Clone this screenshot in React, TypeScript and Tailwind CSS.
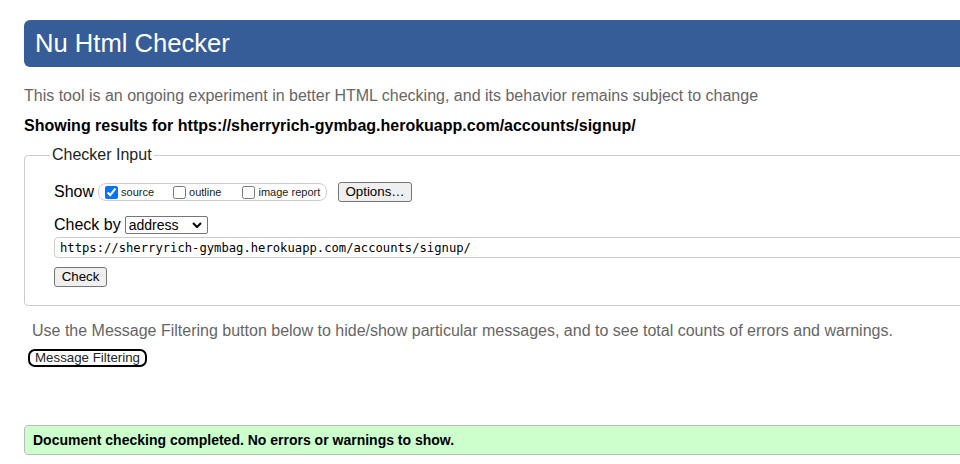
import { useState } from "react";

function Chevron() {
  return (
    <svg width="10" height="7" viewBox="0 0 10 7" className="pointer-events-none absolute right-[6px] top-1/2 -translate-y-1/2">
      <path d="M1 1.5 L5 5.5 L9 1.5" fill="none" stroke="#000" strokeWidth="2" />
    </svg>
  );
}

function Check({ label, checked, onChange }: { label: string; checked: boolean; onChange: () => void }) {
  return (
    <label className="flex items-center gap-[3px] text-[11px] text-[#222]">
      <input
        type="checkbox"
        checked={checked}
        onChange={onChange}
        className="m-0 h-[13px] w-[13px] accent-[#0075ff]"
      />
      {label}
    </label>
  );
}

export default function App() {
  const [show, setShow] = useState({ source: true, outline: false, image: false });
  const [url, setUrl] = useState("https://sherryrich-gymbag.herokuapp.com/accounts/signup/");

  return (
    <div className="h-[464px] w-[960px] overflow-hidden bg-white font-['Liberation_Sans',Arial,sans-serif] text-black">
      <div className="w-[1100px] pl-[24px] pt-[20px]">
        <h1 className="h-[47px] rounded-l-[6px] bg-[#365d98] pl-[11px] text-[25.6px] leading-[47px] text-white">
          Nu Html Checker
        </h1>

        <p className="mt-[20px] text-[16px] leading-[18px] text-[#666]">
          This tool is an ongoing experiment in better HTML checking, and its behavior remains subject to change
        </p>
        <p className="mt-[12px] text-[16px] font-bold leading-[18px]">
          Showing results for https://sherryrich-gymbag.herokuapp.com/accounts/signup/
        </p>

        <fieldset className="mt-[11px] rounded-l-[4px] border border-[#ccc] pb-[18px] pl-[29px] pt-[18px]">
          <legend className="-ml-[4px] px-[2px] text-[16px] leading-[18px] text-[#222]">Checker Input</legend>

          <div className="flex h-[20px] items-center">
            <span className="text-[16px] leading-[18px]">Show</span>
            <div className="ml-[4px] flex h-[18px] w-[229px] items-center rounded-[8px] border border-[#ccc] pl-[6px]">
              <Check label="source" checked={show.source} onChange={() => setShow({ ...show, source: !show.source })} />
              <div className="ml-[19px]">
                <Check label="outline" checked={show.outline} onChange={() => setShow({ ...show, outline: !show.outline })} />
              </div>
              <div className="ml-[21px]">
                <Check label="image report" checked={show.image} onChange={() => setShow({ ...show, image: !show.image })} />
              </div>
            </div>
            <button className="ml-[11px] h-[20px] w-[74px] rounded-[3px] border border-[#767676] bg-[#efefef] text-[13.3px] leading-[18px]">
              Options…
            </button>
          </div>

          <div className="mt-[13px] flex h-[20px] items-center">
            <span className="text-[16px] leading-[18px]">Check by</span>
            <div className="relative ml-[4px]">
              <select className="h-[18px] w-[83px] appearance-none rounded-[2px] border border-[#767676] bg-white pl-[3px] text-[14px] leading-[16px]">
                <option>address</option>
                <option>file upload</option>
                <option>text input</option>
              </select>
              <Chevron />
            </div>
          </div>

          <input
            value={url}
            onChange={(e) => setUrl(e.target.value)}
            className="mt-[2px] block h-[21px] w-[1000px] rounded-[4px] border border-[#ccc] pl-[5px] font-['DejaVu_Sans_Mono',monospace] text-[12.2px] text-black outline-none"
          />

          <button className="mt-[9px] block h-[20px] w-[53px] rounded-[3px] border border-[#767676] bg-[#efefef] text-[13.3px] leading-[18px]">
            Check
          </button>
        </fieldset>

        <p className="mt-[16px] pl-[8px] text-[16px] leading-[18px] text-[#666]">
          Use the Message Filtering button below to hide/show particular messages, and to see total counts of errors and warnings.
        </p>
        <button className="ml-[4px] mt-[9px] block h-[18px] w-[119px] rounded-[7px] border-2 border-black bg-white text-[13.3px] leading-[14px] text-[#222]">
          Message Filtering
        </button>

        <div className="mt-[58px] flex h-[30px] items-center rounded-l-[4px] border border-[#bbb] bg-[#ccffcc] pl-[8px] text-[14px] font-bold">
          Document checking completed. No errors or warnings to show.
        </div>
      </div>
    </div>
  );
}
